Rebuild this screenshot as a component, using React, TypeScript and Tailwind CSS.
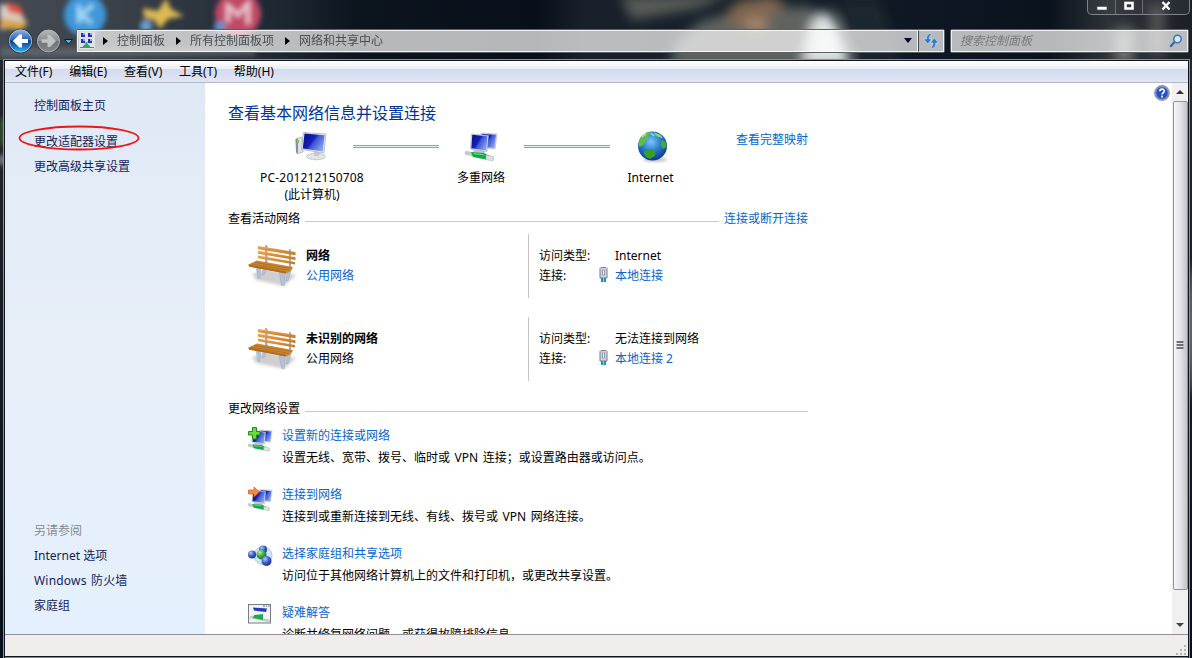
import React from 'react';

const Backdrop = () => (
  <svg className="absolute left-0 top-0" width="1192" height="658" viewBox="0 0 1192 658">
    <defs>
      <linearGradient id="desk" x1="0" x2="1">
        <stop offset="0" stopColor="#454b54" />
        <stop offset="0.1" stopColor="#3a4048" />
        <stop offset="0.24" stopColor="#1c2631" />
        <stop offset="0.3" stopColor="#0c141e" />
        <stop offset="0.45" stopColor="#080f1a" />
        <stop offset="0.49" stopColor="#1a202b" />
        <stop offset="0.62" stopColor="#14202a" />
        <stop offset="0.8" stopColor="#0d1622" />
        <stop offset="0.88" stopColor="#0a121d" />
        <stop offset="0.93" stopColor="#2d3237" />
        <stop offset="1" stopColor="#1b2027" />
      </linearGradient>
      <filter id="b3" x="-50%" y="-50%" width="200%" height="200%"><feGaussianBlur stdDeviation="2.4" /></filter>
      <filter id="b6" x="-50%" y="-50%" width="200%" height="200%"><feGaussianBlur stdDeviation="6" /></filter>
      <linearGradient id="edge" x1="0" x2="0" y1="0" y2="1">
        <stop offset="0" stopColor="#23282f" />
        <stop offset="0.5" stopColor="#141b25" />
        <stop offset="1" stopColor="#06101b" />
      </linearGradient>
    </defs>
    <rect width="1192" height="60" fill="url(#desk)" />
    <rect y="60" width="1192" height="598" fill="url(#edge)" />
    <g filter="url(#b3)">
      <rect x="1" y="48" width="130" height="8" fill="#7b8185" opacity="0.5" />
      <path d="M0 4L16 8L28 24L0 30Z" fill="#d8d0c8" />
      <path d="M6 2L20 6L24 16L8 12Z" fill="#dd5544" />
      <path d="M0 18L28 22L22 30L0 28Z" fill="#d8a548" />
      <circle cx="85" cy="15" r="21" fill="#3f97d8" />
      <path d="M79 5V23M93 5L81 15L92 23" stroke="#a4dcfa" strokeWidth="4" fill="none" />
      <path d="M143 8L158 11L166 -2L171 9L184 16L168 19L160 29L154 20L144 18Z" fill="#dcb955" />
      <circle cx="146" cy="26" r="6" fill="#6b9fd4" />
      <circle cx="238" cy="14" r="23" fill="#c04866" />
      <path d="M228 22V6L238 15L248 4V24" stroke="#eec4d0" strokeWidth="4" fill="none" />
      <circle cx="220" cy="27" r="6" fill="#648fc8" />
      <rect x="130" y="48" width="125" height="8" fill="#86898a" opacity="0.45" />
      <rect x="2" y="118" width="3" height="28" fill="#5a8c3c" />
      <rect x="0" y="155" width="4" height="10" fill="#aeb3b5" />
    </g>
    <g filter="url(#b6)">
      <path d="M620 -4L730 -6L700 8L632 20Z" fill="#575b57" />
      <path d="M675 44L700 22L740 10L810 6L830 30L850 66L670 66Z" fill="#5f6460" />
      <path d="M722 20L736 2L770 -4L786 2L772 16L745 28Z" fill="#80664f" />
      <ellipse cx="756" cy="24" rx="12" ry="5" fill="#b58f72" />
      <path d="M802 66L812 22L824 10L836 22L852 66Z" fill="#dfe3e1" />
      <path d="M836 0L860 60L900 60L880 0Z" fill="#1d262e" />
      <rect x="1115" y="28" width="18" height="34" fill="#777" />
      <rect x="1150" y="5" width="14" height="50" fill="#555" />
      <ellipse cx="1191" cy="330" rx="4" ry="65" fill="#9da5a9" />
    </g>
  </svg>
);

const Tri = () => (
  <svg width="5" height="8" viewBox="0 0 5 8"><path d="M0 0L5 4L0 8Z" fill="#000" /></svg>
);

const NavButtons = () => (
  <svg width="74" height="30" viewBox="0 0 74 30" className="shrink-0">
    <defs>
      <linearGradient id="bk" x1="0" x2="0" y1="0" y2="1">
        <stop offset="0" stopColor="#8fb2dc" />
        <stop offset="0.45" stopColor="#2c60b0" />
        <stop offset="0.5" stopColor="#0b3c94" />
        <stop offset="1" stopColor="#2fb4f0" />
      </linearGradient>
      <linearGradient id="fw" x1="0" x2="0" y1="0" y2="1">
        <stop offset="0" stopColor="#b4b7ba" />
        <stop offset="0.48" stopColor="#8a8e92" />
        <stop offset="0.52" stopColor="#6f7478" />
        <stop offset="1" stopColor="#85898c" />
      </linearGradient>
    </defs>
    <circle cx="20.500" cy="15" r="12.300" fill="#26323f" />
    <circle cx="20.500" cy="15" r="11.200" fill="url(#bk)" stroke="#b9d2ea" strokeWidth="0.800" />
    <path d="M12.800 15L19.500 8.500H22V13H28V17H22V21.500H19.500Z" fill="#fff" />
    <circle cx="48.500" cy="15" r="12" fill="#3a3e43" />
    <circle cx="48.500" cy="15" r="11" fill="url(#fw)" stroke="#b6b9bb" strokeWidth="0.900" />
    <path d="M56 15L50 9H47.500V13.300H41.500V16.700H47.500V21H50Z" fill="#c0c3c5" />
    <path d="M64.500 13.500H72.500L68.500 18Z" fill="#56b2e6" stroke="#0b1c2c" strokeWidth="1" />
  </svg>
);

const PanelIcon = () => (
  <svg width="16" height="17" viewBox="0 0 16 17">
    <rect width="16" height="17" fill="#dfe3e4" />
    <g fill="#2534b4">
      <rect x="2" y="1" width="4" height="4" /><rect x="9" y="1" width="4" height="4" />
      <rect x="2" y="7" width="4" height="4" /><rect x="9" y="7" width="4" height="4" />
    </g>
    <g fill="#8ea4e6">
      <rect x="4" y="1" width="2" height="2" /><rect x="11" y="1" width="2" height="2" />
      <rect x="4" y="7" width="2" height="2" /><rect x="11" y="7" width="2" height="2" />
    </g>
    <path d="M6.500 10H8.500V12L11 14V15H15V16H1V15H4V14L6.500 12Z" fill="#27a768" />
  </svg>
);

const RefreshIcon = () => (
  <svg width="16" height="16" viewBox="0 0 16 16">
    <path d="M7.500 0.500C4.500 1 3.300 3.500 3.500 6H0.500L4.800 11L8.800 6H6.200C6 4 6.800 2.500 8.500 1.800Z" fill="#2f7cc6" stroke="#eef5fb" strokeWidth="0.500" />
    <path d="M9 15.500C12 15 13 12.500 12.800 10H15.500L11.300 4.800L7.300 10H10C10 12 9.500 13.500 8 14.500Z" fill="#2f7cc6" stroke="#eef5fb" strokeWidth="0.500" />
  </svg>
);

const ScreenDefs = () => (
  <svg width="0" height="0" className="absolute">
    <defs>
      <linearGradient id="scr" x1="0" x2="1" y1="0" y2="0.6">
        <stop offset="0" stopColor="#060d8c" />
        <stop offset="0.5" stopColor="#1522b4" />
        <stop offset="0.6" stopColor="#3c56d6" />
        <stop offset="1" stopColor="#86a0ee" />
      </linearGradient>
      <linearGradient id="wood" x1="0" x2="0" y1="0" y2="1">
        <stop offset="0" stopColor="#eba850" />
        <stop offset="1" stopColor="#c47622" />
      </linearGradient>
      <radialGradient id="sea" cx="0.45" cy="0.35" r="0.65">
        <stop offset="0" stopColor="#7cc6f4" />
        <stop offset="0.5" stopColor="#2a7fd0" />
        <stop offset="1" stopColor="#0c3a94" />
      </radialGradient>
      <radialGradient id="bb" cx="0.35" cy="0.3" r="0.75">
        <stop offset="0" stopColor="#b6ccfa" />
        <stop offset="0.5" stopColor="#3f62cc" />
        <stop offset="1" stopColor="#142a86" />
      </radialGradient>
      <radialGradient id="gb" cx="0.35" cy="0.3" r="0.75">
        <stop offset="0" stopColor="#b8eeb0" />
        <stop offset="0.5" stopColor="#3fa848" />
        <stop offset="1" stopColor="#14682a" />
      </radialGradient>
      <filter id="soft" x="-30%" y="-30%" width="160%" height="160%"><feGaussianBlur stdDeviation="1.4" /></filter>
    </defs>
  </svg>
);

const ComputerIcon = () => (
  <svg width="34" height="32" viewBox="0 0 34 32">
    <path d="M2 8L8 6L9 21L3 23Z" fill="#dfe2e4" stroke="#a5a9ad" strokeWidth="0.700" />
    <path d="M1.500 8L4 7.500V22.500L2 21.500Z" fill="#8b9094" />
    <rect x="3" y="9" width="2" height="3" fill="#7ac84a" />
    <ellipse cx="22" cy="25.500" rx="9.500" ry="3.300" fill="#e2e5e7" stroke="#aeb3b7" strokeWidth="0.600" />
    <path d="M20 19H26L25 25H20Z" fill="#c4c9cc" />
    <path d="M9.500 1.500L32 3L30 22L7.500 18.500Z" fill="#eceff2" stroke="#a4abb2" strokeWidth="0.700" />
    <path d="M10.500 2.600L30.600 4.200L28.800 20.400L8.800 17.500Z" fill="url(#scr)" />
  </svg>
);

const NetScreens = () => (
  <g>
    <path d="M17 2L33 3L31 18L18 17Z" fill="#e1e6ee" stroke="#a3adba" strokeWidth="0.600" />
    <path d="M18 3L32 3.800L30.500 17L19 16Z" fill="url(#scr)" />
    <path d="M10 19H20L21 22H8Z" fill="#c3c8cc" />
    <path d="M7.500 3L24.500 4.500L23 20.500L6.500 18Z" fill="#e8ecf2" stroke="#9aa5b2" strokeWidth="0.600" />
    <path d="M8.300 3.800L23.500 5.200L22.200 19.500L7.300 17.300Z" fill="url(#scr)" />
  </g>
);

const Cable = () => (
  <g>
    <path d="M2.500 22L12 24L28 27.500" stroke="#c3cbc9" strokeWidth="4" strokeLinecap="round" />
    <path d="M7 21L20 22L26 25L22 28.500L9 26Z" fill="#12a845" />
    <path d="M9 21.800L19 23L21 24.300L10 23.300Z" fill="#62d888" />
    <path d="M22 24L29 25.500V30L22 28.500Z" fill="#dce3e1" stroke="#a4adaa" strokeWidth="0.500" />
  </g>
);

const NetworkIcon = () => (
  <svg width="34" height="32" viewBox="0 0 34 32"><NetScreens /><Cable /></svg>
);

const GlobeIcon = () => (
  <svg width="32" height="32" viewBox="0 0 32 32">
    <ellipse cx="18" cy="28.500" rx="12" ry="2.500" fill="#999" opacity="0.6" filter="url(#soft)" />
    <circle cx="15.500" cy="15" r="14.500" fill="url(#sea)" />
    <path d="M3 8C5 4 9 1.500 13 1L14 3L11 5L11 8L8 10L6 14L2.500 16C1 14 1.500 11 3 8Z" fill="#5fbe3d" />
    <path d="M16 1.500L23 3.500L26 7L23 6.500L19 5Z" fill="#8bd07c" />
    <path d="M8 20L12 18L18.500 20L18 24.500L13 28L9 26L6.500 22Z" fill="#38a028" />
    <path d="M25 9L28.500 11L29.500 16L26 18L23.500 14Z" fill="#48ab2f" />
    <path d="M5 6L9 3M14 2L17 5" stroke="#d7f3dc" strokeWidth="1.500" opacity="0.7" />
  </svg>
);

const BenchIcon = () => (
  <svg width="50" height="44" viewBox="0 0 50 44">
    <path d="M4 30L20 25L48 31L36 42L8 36Z" fill="#777" opacity="0.35" filter="url(#soft)" />
    <path d="M17 1L19.500 1.500V20H17ZM41 5L43 5.500V24H41Z" fill="#a3aab8" />
    <g fill="url(#wood)">
      <path d="M10 2L47.500 8V11.200L10 5.200Z" />
      <path d="M10 6.800L47.500 13.200V16L10 9.800Z" />
      <path d="M10 11.500L47 18V20.500L10 14.200Z" />
    </g>
    <path d="M8 23L13 24L12 34.500H10ZM19 25L16 31H14L15 24ZM31 28L37 29L36.500 41.500H33.500ZM43 27L40 37H38L39 28Z" fill="#b4c0d6" stroke="#8f9aae" strokeWidth="0.300" />
    <path d="M0.500 20.500L9 16.500L45 23L43 27L38 29.500L1 22.500Z" fill="#cd8730" />
    <path d="M3 20L41 26.300M6 18.300L43 24.400" stroke="#99591a" strokeWidth="0.500" />
    <path d="M0.500 20.500L38 27.500V29.500L1 22.500Z" fill="#b06c20" />
  </svg>
);

const PlugIcon = () => (
  <svg width="9" height="16" viewBox="0 0 9 16">
    <path d="M1 1.500L2 0.500H7L8 1.500V11H1Z" fill="#cfd3e2" stroke="#777d92" />
    <path d="M3.500 3H5.500V8H3.500Z" fill="#fff" stroke="#7d849a" strokeWidth="0.800" />
    <path d="M2 11H4V15H2ZM5 11H7V15H5Z" fill="#2193a8" />
    <path d="M4 11.500H5V15.500H4Z" fill="#89d6df" />
  </svg>
);

const NewConnIcon = () => (
  <svg width="25" height="25" viewBox="0 0 25 25">
    <g transform="translate(-1 1.500) scale(0.760)"><NetScreens /><Cable /></g>
    <path d="M4.500 0.500H8.500V4.500H12V8H8.500V12H4.500V8H0.500V4.500H4.500Z" fill="#6fd83a" stroke="#1d8c1d" />
  </svg>
);

const ConnectIcon = () => (
  <svg width="25" height="25" viewBox="0 0 25 25">
    <g transform="translate(-1 2) scale(0.760)"><NetScreens /><Cable /></g>
    <path d="M0.500 4H6V1L11.500 6L6 11V8H0.500Z" fill="#f0894a" stroke="#cc5e28" strokeWidth="0.700" />
  </svg>
);

const HomeGroupIcon = () => (
  <svg width="25" height="22" viewBox="0 0 25 22">
    <circle cx="15" cy="10.500" r="9" fill="#cfe3fa" stroke="#9dbdea" strokeWidth="0.800" />
    <circle cx="15" cy="4.500" r="4" fill="url(#bb)" />
    <circle cx="4" cy="9.500" r="4" fill="url(#bb)" />
    <circle cx="13.500" cy="9.500" r="5" fill="url(#gb)" />
    <circle cx="18.500" cy="16" r="5" fill="url(#bb)" />
  </svg>
);

const TroubleIcon = () => (
  <svg width="24" height="20" viewBox="0 0 24 20">
    <rect x="0.500" y="0.500" width="22" height="18.500" fill="#f1f3f5" stroke="#777c80" />
    <path d="M15 2H17M18 2H19M20 2H21.500" stroke="#4a5580" />
    <path d="M5 3.500L19 4.500L18 8L6 6.500Z" fill="#2639bb" />
    <path d="M2 13L22 17" stroke="#c4cccb" strokeWidth="2.500" />
    <path d="M6 11L15 10V16L5 14Z" fill="#1cab4e" />
  </svg>
);

const Link = ({ children }: { children: React.ReactNode }) => (
  <a className="text-[#0466c8]">{children}</a>
);

type NetProps = { name: string; kind: React.ReactNode; access: string; conn: string };

const NetworkRow = ({ name, kind, access, conn }: NetProps) => (
  <div className="flex h-[64px] pl-[20px]">
    <div className="w-[58px] pt-[10px]"><BenchIcon /></div>
    <div className="w-[222px] pt-[12px]">
      <div className="h-5 font-bold">{name}</div>
      <div className="h-5">{kind}</div>
    </div>
    <div className="border-l border-[#c4c4c4] pl-[10px] pt-[12px]">
      <div className="flex h-5"><span className="w-[76px]">访问类型:</span><span>{access}</span></div>
      <div className="flex h-5">
        <span className="w-[60px]">连接:</span>
        <span className="w-[16px] pt-[1px]"><PlugIcon /></span>
        <Link>{conn}</Link>
      </div>
    </div>
  </div>
);

type TaskProps = { icon: React.ReactNode; title: string; desc: string };

const Task = ({ icon, title, desc }: TaskProps) => (
  <div className="flex h-[59px] shrink-0 pl-[20px]">
    <div className="w-[34px] pt-[1px]">{icon}</div>
    <div>
      <div className="h-[22px]"><Link>{title}</Link></div>
      <div className="h-5 [word-spacing:1.5px]">{desc}</div>
    </div>
  </div>
);

const DoubleLine = ({ className }: { className: string }) => (
  <div className={'mt-[20px] h-[3px] w-[86px] border-y border-[#7ba3cb] bg-[#e6f1fa] ' + className} />
);

const TitleBar = () => (
  <div className="relative flex h-[59px] shrink-0 flex-col">
    <div className="flex h-[27px] justify-end pr-[2px]">
      <div className="flex h-[15px] w-[103px] rounded-b-[5px] border border-t-0 border-[#7d8389] bg-white/5">
        <div className="flex w-[28px] items-center justify-center border-r border-[#6a7076]">
          <svg width="12" height="14" viewBox="0 0 12 14"><rect x="1" y="6.500" width="10" height="3.500" fill="#fff" stroke="#40464e" strokeWidth="0.600" /></svg>
        </div>
        <div className="flex w-[27px] items-center justify-center border-r border-[#6a7076]">
          <svg width="12" height="14" viewBox="0 0 12 14"><path d="M1 1.500H11V10H1ZM4 4.500V7H8V4.500Z" fill="#fff" fillRule="evenodd" stroke="#40464e" strokeWidth="0.500" /></svg>
        </div>
        <div className="flex flex-1 items-center justify-center">
          <svg width="12" height="14" viewBox="0 0 12 14"><path d="M2.500 2L9.500 9.500M9.500 2L2.500 9.500" stroke="#fff" strokeWidth="2.400" /></svg>
        </div>
      </div>
    </div>
    <div className="flex h-[28px] items-center">
      <NavButtons />
      <div className="mb-[1px] ml-[2px] flex h-[24px] w-[869px] rounded-[2px] border border-[#5a6062] bg-white/70 text-[#4a4f52]">
        <div className="flex flex-1 items-center border border-white/80 text-[12px]">
          <div className="ml-px mr-[8px]"><PanelIcon /></div>
          <Tri />
          <span className="ml-[9px] mr-[11px]">控制面板</span>
          <Tri />
          <span className="ml-[9px] mr-[11px]">所有控制面板项</span>
          <Tri />
          <span className="ml-[9px]">网络和共享中心</span>
          <svg className="ml-auto mr-[5px]" width="8" height="5" viewBox="0 0 8 5"><path d="M0 0H8L4 5Z" fill="#050530" /></svg>
        </div>
        <div className="flex w-[26px] items-center justify-center border border-l border-white/80 border-l-[#444b50]"><RefreshIcon /></div>
      </div>
      <div className="mb-[1px] ml-[5px] flex h-[24px] w-[239px] rounded-[2px] border border-[#5a6062] bg-white/70">
        <div className="flex flex-1 items-center justify-between border border-white/80 pl-[8px] pr-[4px]">
          <span className="italic text-[#777b7e]">搜索控制面板</span>
          <svg width="14" height="14" viewBox="0 0 14 14">
            <path d="M2 12L6 7.500" stroke="#3a6cab" strokeWidth="2.400" strokeLinecap="round" />
            <circle cx="8.500" cy="5" r="3.700" fill="#d8e8f4" stroke="#3f78ba" strokeWidth="1.600" />
          </svg>
        </div>
      </div>
    </div>
  </div>
);

const Sidebar = () => (
  <div className="relative flex w-[200px] shrink-0 flex-col bg-linear-to-b from-[#dfe9f5] via-[#e8eff9] to-[#e5f0fe] pl-[29px] text-[#151c55]">
    <div className="mt-[13px] h-[36px]">控制面板主页</div>
    <div className="h-[25px]">更改适配器设置</div>
    <div>更改高级共享设置</div>
    <svg className="absolute left-[13px] top-[42px]" width="124" height="28" viewBox="0 0 124 28">
      <ellipse cx="61" cy="13" rx="59.500" ry="11.500" fill="none" stroke="#ee1515" strokeWidth="1.800" />
    </svg>
    <div className="mb-[18px] mt-auto">
      <div className="h-[25px] text-[#858a90]">另请参阅</div>
      <div className="h-[25px]">Internet 选项</div>
      <div className="h-[25px] tracking-[0.2px] [word-spacing:1px]">Windows 防火墙</div>
      <div className="h-5">家庭组</div>
    </div>
  </div>
);

const Main = () => (
  <div className="flex flex-1 flex-col overflow-hidden bg-white pl-[23px] text-black">
    <div className="flex h-[42px] shrink-0 justify-between pr-[2px]">
      <h1 className="pt-[18px] text-[16px] leading-6 text-[#003399]">查看基本网络信息并设置连接</h1>
      <svg className="mt-[2px]" width="16" height="16" viewBox="0 0 16 16">
        <circle cx="8" cy="8" r="7.300" fill="#2850b8" stroke="#8d96a8" strokeWidth="1.200" />
        <circle cx="8" cy="8" r="6.300" fill="none" stroke="#b9cbf0" strokeWidth="0.700" />
        <path d="M5.800 6.300C5.800 3.400 10.300 3.400 10.300 6C10.300 7.600 8.100 7.600 8.100 9.500" stroke="#fff" strokeWidth="1.600" fill="none" />
        <rect x="7.200" y="10.600" width="1.800" height="1.800" fill="#fff" />
      </svg>
    </div>
    <div className="flex h-[85px] shrink-0 items-start">
      <div className="ml-[32px] flex w-[104px] flex-col items-center pt-[6px]">
        <div className="h-[37px] pr-[3px]"><ComputerIcon /></div>
        <div className="h-[17px] whitespace-nowrap tracking-[0.18px]">PC-201212150708</div>
        <div className="h-[17px]">(此计算机)</div>
      </div>
      <DoubleLine className="-ml-[11px]" />
      <div className="ml-[18px] flex w-[48px] flex-col items-center pt-[6px]">
        <div className="h-[37px]"><NetworkIcon /></div>
        <div className="whitespace-nowrap">多重网络</div>
      </div>
      <DoubleLine className="ml-[19px]" />
      <div className="ml-[16px] flex w-[49px] flex-col items-center pt-[6px]">
        <div className="h-[37px] pl-[4px]"><GlobeIcon /></div>
        <div>Internet</div>
      </div>
      <div className="ml-[61px] pt-[5px]"><Link>查看完整映射</Link></div>
    </div>
    <div className="-mt-[1px] flex h-[24px] w-[580px] shrink-0">
      <span>查看活动网络</span>
      <div className="ml-[5px] mr-[5px] mt-[12px] h-px flex-1 bg-[#c8c8c8]" />
      <Link>连接或断开连接</Link>
    </div>
    <div className="mt-px flex shrink-0 flex-col gap-[19px]">
      <NetworkRow name="网络" kind={<Link>公用网络</Link>} access="Internet" conn="本地连接" />
      <NetworkRow name="未识别的网络" kind="公用网络" access="无法连接到网络" conn="本地连接 2" />
    </div>
    <div className="mt-[18px] flex h-[27px] w-[580px] shrink-0">
      <span>更改网络设置</span>
      <div className="ml-[5px] mt-[12px] h-px flex-1 bg-[#c8c8c8]" />
    </div>
    <Task icon={<NewConnIcon />} title="设置新的连接或网络" desc="设置无线、宽带、拨号、临时或 VPN 连接；或设置路由器或访问点。" />
    <Task icon={<ConnectIcon />} title="连接到网络" desc="连接到或重新连接到无线、有线、拨号或 VPN 网络连接。" />
    <Task icon={<HomeGroupIcon />} title="选择家庭组和共享选项" desc="访问位于其他网络计算机上的文件和打印机，或更改共享设置。" />
    <Task icon={<TroubleIcon />} title="疑难解答" desc="诊断并修复网络问题，或获得故障排除信息。" />
  </div>
);

const ScrollBar = () => (
  <div className="flex w-[16px] shrink-0 flex-col items-center bg-[#f0f0f1]">
    <div className="flex h-[18px] items-center">
      <svg width="8" height="4" viewBox="0 0 8 4"><path d="M0 4L4 0L8 4Z" fill="#333" /></svg>
    </div>
    <div className="flex h-[489px] w-[15px] items-center justify-center rounded-[2px] border border-[#8f9296] bg-linear-to-r from-[#f6f6f6] via-[#e4e4e7] to-[#c3c4ca]">
      <svg width="8" height="9" viewBox="0 0 8 9"><path d="M0.500 1H7.500M0.500 4H7.500M0.500 7H7.500" stroke="#4a4c50" strokeWidth="1.400" /></svg>
    </div>
    <div className="flex flex-1 items-center pt-[26px]">
      <svg width="8" height="4" viewBox="0 0 8 4"><path d="M0 0L4 4L8 0Z" fill="#444" /></svg>
    </div>
  </div>
);

const menus = ['文件(F)', '编辑(E)', '查看(V)', '工具(T)', '帮助(H)'];

export default function App() {
  return (
    <div className="relative flex h-[658px] w-[1192px] flex-col overflow-hidden bg-[#0a121c] font-['Noto_Sans','Noto_Sans_CJK_SC',sans-serif] text-[12px] leading-5">
      <Backdrop />
      <ScreenDefs />
      <TitleBar />
      <div className="relative ml-[3px] mr-[2px] flex h-[599px] flex-col border border-b-0 border-[#8b9297]">
        <div className="flex h-[598px] flex-col border border-b-0 border-[#10151c]">
          <div className="flex h-[22px] shrink-0 items-center gap-[16.8px] border-b border-[#b4b9c9] bg-[linear-gradient(to_bottom,#ffffff_0%,#e9eef7_36%,#d4dbed_38%,#e0e5f5_100%)] pl-[10px] text-black">
            {menus.map((m) => <span key={m}>{m}</span>)}
          </div>
          <div className="flex h-[551px] shrink-0">
            <Sidebar />
            <Main />
            <ScrollBar />
          </div>
          <div className="flex h-[22px] shrink-0 items-end justify-end border-t border-[#8d8f92] bg-[#f0edec]">
            <svg width="12" height="12" viewBox="0 0 12 12" fill="#b5b3b3">
              <rect x="8" y="1" width="2" height="2" />
              <rect x="4" y="5" width="2" height="2" /><rect x="8" y="5" width="2" height="2" />
              <rect x="0" y="9" width="2" height="2" /><rect x="4" y="9" width="2" height="2" /><rect x="8" y="9" width="2" height="2" />
            </svg>
          </div>
          <div className="h-px shrink-0 bg-[#10151c]" />
          <div className="h-px shrink-0 bg-[#7f878c]" />
        </div>
      </div>
    </div>
  );
}
